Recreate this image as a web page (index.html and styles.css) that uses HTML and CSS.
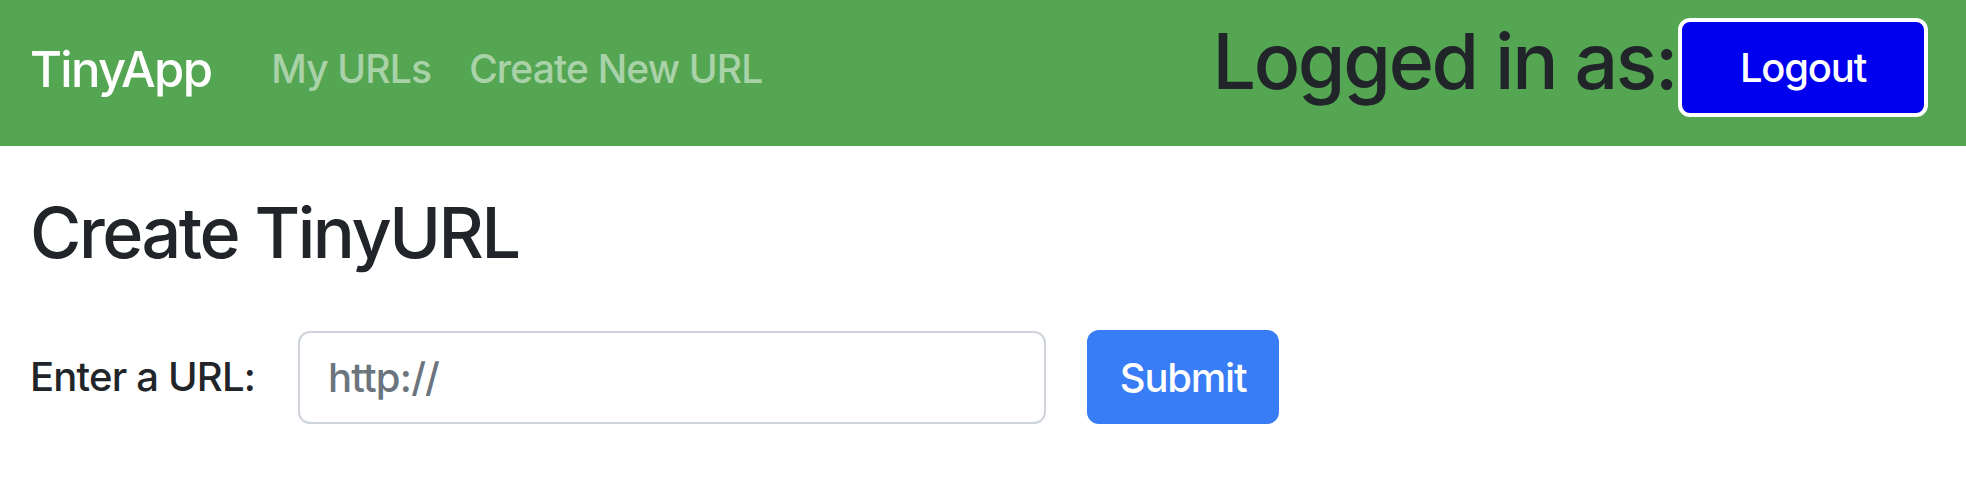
FILE: index.html
```html
<!DOCTYPE html>
<html lang="en">
<head>
<meta charset="utf-8">
<title>TinyApp</title>
<link rel="stylesheet" href="styles.css">
</head>
<body>
<nav class="navbar">
  <a class="brand" href="#">TinyApp</a>
  <div class="nav-links">
    <a class="nav-link" href="#">My URLs</a>
    <a class="nav-link" href="#">Create New URL</a>
  </div>
  <div class="user-box">
    <h2 class="logged">Logged in as:</h2>
    <button class="logout" type="button">Logout</button>
  </div>
</nav>
<main class="content">
  <h3 class="title">Create TinyURL</h3>
  <form class="url-form">
    <label class="url-label" for="longURL">Enter a URL:</label>
    <input class="url-input" id="longURL" type="text" placeholder="http://">
    <button class="submit" type="button">Submit</button>
  </form>
</main>
</body>
</html>
```
FILE: styles.css
```css
* { box-sizing: border-box; }
html, body { margin: 0; padding: 0; }
body {
  font-family: Inter, "Liberation Sans", Arial, sans-serif;
  font-weight: 500;
  color: #212529;
  background: #ffffff;
  width: 1966px;
  height: 504px;
  overflow: hidden;
}
.navbar {
  height: 146px;
  background: #54a652;
  display: flex;
  align-items: center;
  padding: 0 38px 0 30px;
}
.brand {
  font-size: 49px;
  letter-spacing: -0.035em;
  line-height: 1.5;
  color: #ffffff;
  text-decoration: none;
  margin-right: 40px;
  margin-bottom: 6px;
}
.nav-links {
  display: flex;
  margin-bottom: 7px;
}
.nav-link {
  font-size: 39px;
  letter-spacing: -0.022em;
  line-height: 1.5;
  padding: 0 20px;
  color: rgba(255, 255, 255, 0.5);
  text-decoration: none;
}
.nav-link + .nav-link { padding-left: 18px; }
.user-box {
  margin-left: auto;
  display: flex;
  align-items: center;
}
.logged {
  font-size: 77px;
  font-weight: 500;
  letter-spacing: -0.03em;
  line-height: 1.2;
  margin: 0 2px 23px 0;
  color: #212529;
}
.logout {
  width: 250px;
  height: 99px;
  background: #0000ee;
  color: #ffffff;
  border: 4px solid #ffffff;
  border-radius: 12px;
  font-family: Inter, "Liberation Sans", Arial, sans-serif;
  font-weight: 500;
  font-size: 40px;
  letter-spacing: -0.03em;
  padding: 0;
  margin-bottom: 11px;
}
.content {
  padding: 45px 30px 0 30px;
}
.title {
  font-size: 70px;
  font-weight: 500;
  letter-spacing: -0.035em;
  line-height: 1.2;
  margin: 0;
}
.url-form {
  margin-top: 55px;
  display: flex;
  align-items: center;
}
.url-label {
  font-size: 40px;
  letter-spacing: -0.02em;
  line-height: 1.5;
  margin-right: 43px;
}
.url-input {
  width: 748px;
  height: 93px;
  border: 2px solid #ced4da;
  border-radius: 12px;
  padding: 0 28px;
  font-family: Inter, "Liberation Sans", Arial, sans-serif;
  font-weight: 500;
  font-size: 40px;
  letter-spacing: -0.02em;
  color: #212529;
  margin-right: 41px;
}
.url-input::placeholder { color: #6c757d; }
.submit {
  width: 192px;
  height: 94px;
  background: #387cf6;
  color: #ffffff;
  border: none;
  border-radius: 12px;
  font-family: Inter, "Liberation Sans", Arial, sans-serif;
  font-weight: 500;
  font-size: 40px;
  letter-spacing: -0.03em;
  padding: 0;
}
```
